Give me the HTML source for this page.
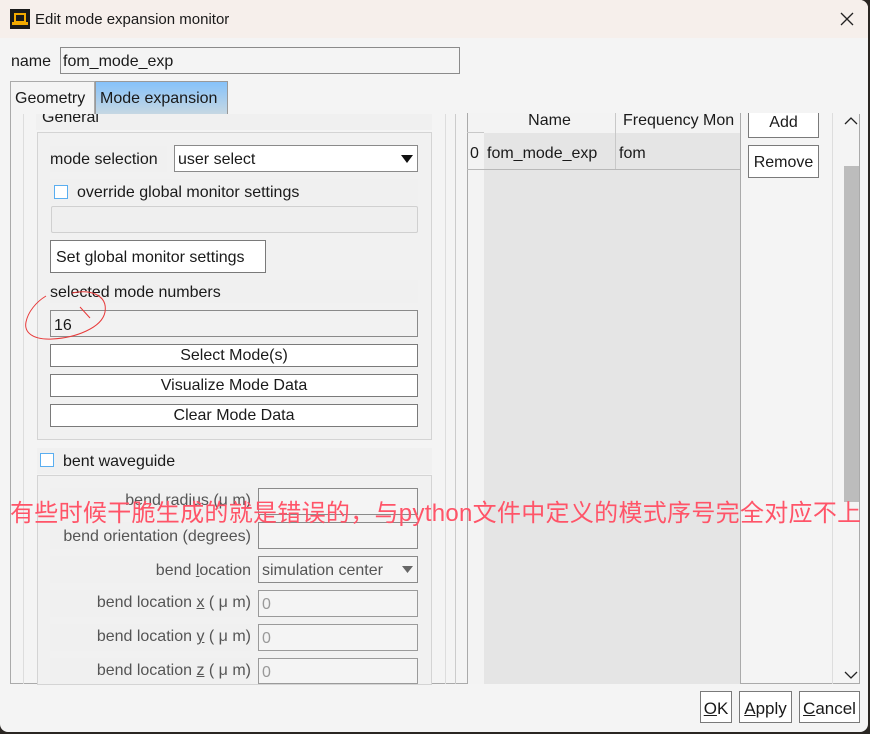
<!DOCTYPE html>
<html><head><meta charset="utf-8"><style>
*{box-sizing:border-box;margin:0;padding:0}
body{width:870px;height:734px;background:#2a2622;position:relative;overflow:hidden;font-family:"Liberation Sans","Noto Sans CJK SC",sans-serif;font-size:16px;color:#1a1a1a}
.a{position:absolute}
.win{left:0;top:0;width:868px;height:732px;background:#f4f4f4;border-radius:0 8px 8px 8px;overflow:hidden}
.tb{left:0;top:0;width:868px;height:38px;background:#f6efeb}
.bx{position:absolute;border:1px solid #8a8a8a;background:#fff}
.lbl{position:absolute;background:#f0f0f0;white-space:nowrap}
.btn{position:absolute;border:1px solid #7a7a7a;background:#fff;text-align:center;line-height:22px}
.gray{color:#555}
.dis{position:absolute;border:1px solid #9a9a9a;background:#f4f4f4;color:#999;padding-left:3px;line-height:28px}
</style></head><body>
<div class="a win">
<div class="a tb"></div>
<svg class="a" style="left:10px;top:9px" width="20" height="20"><rect width="20" height="20" fill="#1a1a1a"/><rect x="2" y="13" width="16" height="3" fill="#f2a900"/><rect x="5" y="5" width="10" height="8" fill="none" stroke="#f2a900" stroke-width="2"/></svg>
<div class="a" style="left:35px;top:11px;font-size:15px">Edit mode expansion monitor</div>
<svg class="a" style="left:840px;top:12px" width="14" height="14"><path d="M1 1L13 13M13 1L1 13" stroke="#222" stroke-width="1.3"/></svg>

<div class="a" style="left:11px;top:53px">name</div>
<div class="bx" style="left:60px;top:47px;width:400px;height:27px;background:#f4f4f4;padding:5px 2px">fom_mode_exp</div>

<div class="a" style="left:10px;top:81px;width:85px;height:34px;border:1px solid #aaa;border-bottom:none;background:#f4f4f4;padding:8px 4px">Geometry</div>
<div class="a" style="left:95px;top:81px;width:133px;height:34px;border:1px solid #999;border-bottom:none;background:linear-gradient(#86c2fa,#c8d8e2);padding:8px 4px">Mode expansion</div>

<div class="a" style="left:10px;top:114px;width:850px;height:570px;border:1px solid #aaa;border-top:none"></div>
<div class="a" style="left:23px;top:114px;width:1px;height:570px;background:#ddd"></div>
<div class="a" style="left:445px;top:114px;width:1px;height:570px;background:#ddd"></div>
<div class="a" style="left:455px;top:114px;width:1px;height:570px;background:#ccc"></div>

<div class="lbl" style="left:36px;top:114px;width:396px;height:16px;line-height:8px;padding-left:6px;overflow:hidden">General</div>
<div class="a" style="left:37px;top:132px;width:395px;height:308px;border:1px solid #d4d4d4;background:#f1f1f1"></div>
<div class="lbl" style="left:50px;top:146px;width:117px;height:26px;line-height:28px">mode selection</div>
<div class="bx" style="left:174px;top:145px;width:244px;height:27px;padding:5px 3px">user select<svg class="a" style="right:4px;top:9px" width="12" height="8"><path d="M0 0H12L6 8Z" fill="#111"/></svg></div>
<div class="lbl" style="left:50px;top:179px;width:368px;height:26px"></div>
<div class="a" style="left:54px;top:185px;width:14px;height:14px;border:1px solid #5aaef0;background:#fff"></div>
<div class="a" style="left:77px;top:184px">override global monitor settings</div>
<div class="a" style="left:51px;top:206px;width:367px;height:27px;border:1px solid #d0d0d0;border-radius:2px;background:#efefef"></div>
<div class="btn" style="left:50px;top:240px;width:216px;height:33px;line-height:34px;text-align:left;padding-left:5px">Set global monitor settings</div>
<div class="lbl" style="left:50px;top:280px;width:368px;height:23px;line-height:26px">selected mode numbers</div>
<div class="bx" style="left:50px;top:310px;width:368px;height:27px;background:#f2f2f2;padding:6px 3px">16</div>
<div class="btn" style="left:50px;top:344px;width:368px;height:23px">Select Mode(s)</div>
<div class="btn" style="left:50px;top:374px;width:368px;height:23px">Visualize Mode Data</div>
<div class="btn" style="left:50px;top:404px;width:368px;height:23px">Clear Mode Data</div>
<svg class="a" style="left:0;top:280px" width="120" height="70"><path d="M72 13C88 9 108 14 105 32C102 48 75 58 52 59C32 60 24 52 26 42C28 32 36 22 46 16M80 27L90 38" fill="none" stroke="#e83a3a" stroke-width="1"/></svg>

<div class="lbl" style="left:37px;top:448px;width:395px;height:26px"></div>
<div class="a" style="left:40px;top:453px;width:14px;height:14px;border:1px solid #5aaef0;background:#fff"></div>
<div class="a" style="left:63px;top:453px">bent waveguide</div>
<div class="a" style="left:37px;top:475px;width:395px;height:210px;border:1px solid #d4d4d4;background:#f1f1f1"></div>
<div class="lbl gray" style="left:50px;top:488px;width:201px;height:26px;text-align:right;line-height:26px">bend radius (μ m)</div>
<div class="bx" style="left:258px;top:488px;width:160px;height:27px;background:#f4f4f4"></div>
<div class="lbl gray" style="left:50px;top:522px;width:201px;height:27px;text-align:right;line-height:29px">bend orientation (degrees)</div>
<div class="bx" style="left:258px;top:522px;width:160px;height:27px;background:#f4f4f4"></div>
<div class="lbl gray" style="left:50px;top:556px;width:201px;height:27px;text-align:right;line-height:29px">bend <u>l</u>ocation</div>
<div class="bx gray" style="left:258px;top:556px;width:160px;height:27px;background:#f4f4f4;padding:5px 3px">simulation center<svg class="a" style="right:4px;top:9px" width="11" height="7"><path d="M0 0H11L5.5 7Z" fill="#666"/></svg></div>
<div class="lbl gray" style="left:50px;top:590px;width:201px;height:27px;text-align:right;line-height:26px">bend location <u>x</u> ( μ m)</div>
<div class="dis" style="left:258px;top:590px;width:160px;height:27px">0</div>
<div class="lbl gray" style="left:50px;top:624px;width:201px;height:27px;text-align:right;line-height:26px">bend location <u>y</u> ( μ m)</div>
<div class="dis" style="left:258px;top:624px;width:160px;height:27px">0</div>
<div class="lbl gray" style="left:50px;top:658px;width:201px;height:26px;text-align:right;line-height:26px">bend location <u>z</u> ( μ m)</div>
<div class="dis" style="left:258px;top:658px;width:160px;height:26px">0</div>

<!-- right table -->
<div class="a" style="left:467px;top:113px;width:274px;height:571px;border-left:1px solid #aaa;border-right:1px solid #aaa;background:#f3f3f3"></div>
<div class="a" style="left:484px;top:133px;width:256px;height:551px;background:#e5e5e5"></div>
<div class="a" style="left:484px;top:113px;width:131px;height:20px;text-align:center;line-height:16px;background:#f3f3f3">Name</div>
<div class="a" style="left:615px;top:113px;width:1px;height:56px;background:#c8c8c8"></div>
<div class="a" style="left:616px;top:113px;width:124px;height:20px;line-height:16px;padding-left:7px;background:#f3f3f3;white-space:nowrap;overflow:hidden">Frequency Mon</div>
<div class="a" style="left:467px;top:132px;width:17px;height:1px;background:#c8c8c8"></div>
<div class="a" style="left:467px;top:169px;width:273px;height:1px;background:#b8b8b8"></div>
<div class="a" style="left:470px;top:145px">0</div>
<div class="a" style="left:487px;top:145px">fom_mode_exp</div>
<div class="a" style="left:619px;top:145px">fom</div>
<div class="btn" style="left:748px;top:113px;width:71px;height:25px;line-height:20px;border-top:none">Add</div>
<div class="btn" style="left:748px;top:145px;width:71px;height:33px;line-height:33px">Remove</div>

<div class="a" style="left:832px;top:113px;width:1px;height:571px;background:#ddd"></div>
<svg class="a" style="left:844px;top:116px" width="14" height="10"><path d="M1 8L7 2L13 8" fill="none" stroke="#222" stroke-width="1.3"/></svg>
<div class="a" style="left:844px;top:166px;width:15px;height:336px;background:#bcbcbc"></div>
<svg class="a" style="left:844px;top:670px" width="14" height="10"><path d="M1 2L7 8L13 2" fill="none" stroke="#222" stroke-width="1.3"/></svg>

<div class="a" style="left:10px;top:493px;font-size:24px;color:#ff5468;white-space:nowrap;letter-spacing:0.3px">有些时候干脆生成的就是错误的，与python文件中定义的模式序号完全对应不上</div>

<div class="btn" style="left:700px;top:691px;width:32px;height:32px;line-height:34px;font-size:17px"><u>O</u>K</div>
<div class="btn" style="left:739px;top:691px;width:53px;height:32px;line-height:34px;font-size:17px"><u>A</u>pply</div>
<div class="btn" style="left:799px;top:691px;width:61px;height:32px;line-height:34px;font-size:17px"><u>C</u>ancel</div>
</div>
</body></html>
